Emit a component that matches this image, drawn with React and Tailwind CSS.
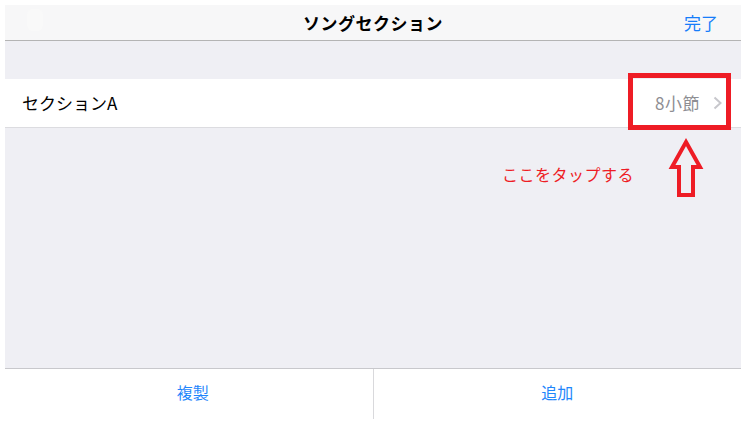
import React from 'react';

const jp = { fontFamily: '"Noto Sans CJK JP", "Noto Sans", sans-serif' };

const UpArrow = () => (
  <svg width="36" height="62" viewBox="0 0 36 62" className="absolute left-[668px] top-[137px]">
    <polygon
      points="18,5 32,30 25,30 25,58 11,58 11,30 4,30"
      fill="none"
      stroke="#ee1c25"
      strokeWidth="4"
      strokeLinejoin="miter"
    />
  </svg>
);

const App = () => {
  return (
    <div className="relative w-[746px] h-[424px] bg-white p-[5px]" style={jp}>
      <div className="flex flex-col w-[736px] h-[414px]">
        {/* nav bar */}
        <div className="relative flex items-center justify-center h-[36px] bg-[#f7f7f8] border-b border-[#b4b4b4]">
          <div className="absolute left-[22px] top-[4px] w-[16px] h-[22px] rounded-md bg-[#f9f9f9]" />
          <span className="text-[17px] font-bold text-black tracking-[0.5px]">ソングセクション</span>
          <span className="absolute right-[23px] text-[17px] text-[#167dfa]">完了</span>
        </div>

        {/* grouped list */}
        <div className="flex-1 bg-[#efeff4] pt-[38px]">
          <div className="flex items-center h-[49px] bg-white border-b border-[#dcdce0] pl-[17px] pr-[19px]">
            <span className="text-[17px] text-black flex-1">セクションA</span>
            <span className="text-[17px] text-[#8e8e93] mr-[13px] tracking-[0.5px]">8小節</span>
            <svg width="9" height="14" viewBox="0 0 9 14">
              <path d="M1.5 1.5 L7.5 7 L1.5 12.5" fill="none" stroke="#c7c7cc" strokeWidth="2" />
            </svg>
          </div>
        </div>

        {/* toolbar */}
        <div className="flex h-[51px] bg-white border-t border-[#c8c8cc]">
          <div className="flex-1 flex items-center justify-center text-[16px] text-[#1f86fb] pb-[4px]">
            <span className="ml-[8px]">複製</span>
          </div>
          <div className="w-px bg-[#d9d9dc]" />
          <div className="flex-1 flex items-center justify-center text-[16px] text-[#1f86fb] pb-[4px]">
            追加
          </div>
        </div>
      </div>

      {/* annotations */}
      <div className="absolute left-[628px] top-[73px] w-[103px] h-[57px] border-[5px] border-[#ee1c25]" />
      <span className="absolute left-[502px] top-[164px] text-[16px] leading-[20px] text-[#ee1c25] tracking-[0.5px]">
        ここをタップする
      </span>
      <UpArrow />
    </div>
  );
};

export default App;
